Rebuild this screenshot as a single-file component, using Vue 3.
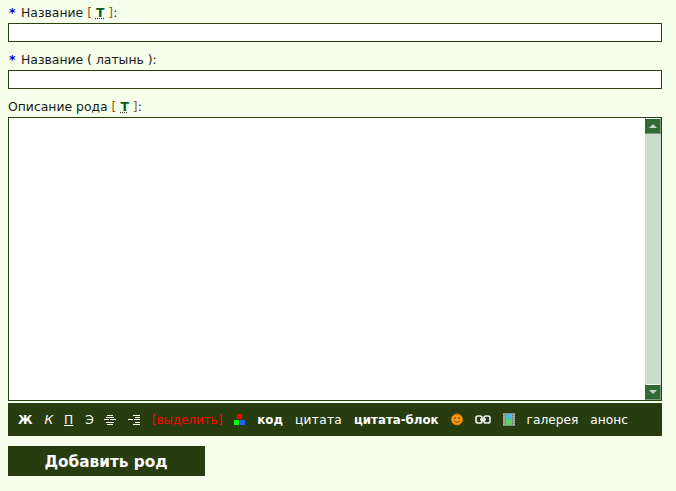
<script setup>
</script>

<template>
  <form class="page" @submit.prevent>
    <div class="field">
      <label class="label"><span class="req">*</span>Название <span class="br">[</span> <abbr class="t">T</abbr> <span class="br">]</span>:</label>
      <input class="input" type="text" />
    </div>
    <div class="field">
      <label class="label"><span class="req">*</span>Название ( латынь ):</label>
      <input class="input" type="text" />
    </div>
    <div class="field area">
      <label class="label">Описание рода <span class="br">[</span> <abbr class="t">T</abbr> <span class="br">]</span>:</label>
      <div class="box">
        <div class="text"></div>
        <div class="scroll">
          <div class="sbtn"><svg width="8" height="4" viewBox="0 0 8 4"><path d="M4 0 8 4H0Z" fill="#c5d5c5"/></svg></div>
          <div class="track"></div>
          <div class="sbtn"><svg width="8" height="4" viewBox="0 0 8 4"><path d="M0 0H8L4 4Z" fill="#c5d5c5"/></svg></div>
        </div>
      </div>
    </div>
    <div class="toolbar">
      <b class="tool">Ж</b>
      <i class="tool tight">К</i>
      <u class="tool">П</u>
      <span class="tool tight2">Э</span>
      <svg class="ico" width="12" height="12" viewBox="0 0 12 12"><path d="M3 1.500H9M2 3.500H10M0 5.500H5M6 5.500H12M2 8.500H10M3 10.500H9" stroke="#fff" fill="none"/></svg>
      <svg class="ico" width="12" height="12" viewBox="0 0 12 12"><path d="M5 1.500H12M7 3.500H12M0 5.500H5M6 5.500H12M7 8.500H12M5 10.500H12" stroke="#fff" fill="none"/></svg>
      <span class="tool sel">[выделить]</span>
      <svg class="ico" width="11" height="11" viewBox="0 0 11 11"><rect x="3" y="0" width="5" height="5" fill="#f00"/><rect x="0" y="6" width="5" height="5" fill="#0f0"/><rect x="6" y="6" width="5" height="5" fill="#2a5cff"/></svg>
      <b class="tool">код</b>
      <span class="tool cite">цитата</span>
      <b class="tool">цитата-блок</b>
      <svg class="ico" width="12" height="13" viewBox="0 0 12 13"><circle cx="6" cy="6.500" r="5.500" fill="#f2a010" stroke="#e87000"/><circle cx="4" cy="5" r="1" fill="#8a4000"/><circle cx="8" cy="5" r="1" fill="#8a4000"/><path d="M3 8Q6 11 9 8" stroke="#8a4000" fill="none"/></svg>
      <svg class="ico" width="16" height="9" viewBox="0 0 16 9"><rect x="1" y="1" width="6" height="7" rx="2" fill="none" stroke="#eee" stroke-width="1.700"/><rect x="9" y="1" width="6" height="7" rx="2" fill="none" stroke="#eee" stroke-width="1.700"/><path d="M5 4.500H11" stroke="#eee" stroke-width="2"/></svg>
      <svg class="ico" width="12" height="13" viewBox="0 0 12 13"><rect width="12" height="13" fill="#858f85"/><path d="M1 1V12M11 1V12" stroke="#d8dcd8" stroke-dasharray="1 1"/><rect x="3" y="1" width="6" height="5" fill="#4fb8e0"/><rect x="3" y="6" width="6" height="6" fill="#62d06a"/></svg>
      <span class="tool">галерея</span>
      <span class="tool">анонс</span>
    </div>
    <button class="submit" type="button">Добавить род</button>
  </form>
</template>

<style>
html, body { margin: 0; background: #f5ffeb; }
</style>

<style scoped>
.page {
  width: 654px;
  margin: 0 0 0 8px;
  padding-top: 4px;
  font-family: "DejaVu Sans", Verdana, sans-serif;
  font-size: 12.400px;
  color: #1a1a1a;
  height: 487px;
  display: flex;
  flex-direction: column;
}
.field { display: flex; flex-direction: column; margin-bottom: 9px; }
.label { height: 19px; line-height: 17px; white-space: pre-wrap; }
.req {
  display: inline-block;
  width: 13px;
  padding-left: 1px;
  box-sizing: border-box;
  color: #0000e0;
  font-weight: bold;
}
.br { color: #8a5a10; }
.t {
  color: #0f5a1e;
  font-weight: bold;
  text-decoration: underline dotted #333;
}
.input {
  box-sizing: border-box;
  width: 654px;
  height: 19px;
  margin: 0;
  padding: 0;
  border: 1px solid #29400f;
  background: #fff;
  display: block;
}
.area { margin-bottom: 2px; }
.box {
  box-sizing: border-box;
  height: 284px;
  border: 1px solid #29400f;
  background: #fff;
  display: flex;
}
.text { flex: 1; }
.scroll {
  width: 16px;
  display: flex;
  flex-direction: column;
  background: #ccdccd;
}
.sbtn {
  height: 16px;
  box-sizing: border-box;
  background: #2f6b35;
  border: 1px solid #7f9a80;
  border-top-color: #fff;
  border-left-color: #2f6b35;
  display: flex;
  align-items: center;
  justify-content: center;
}
.track { flex: 1; }
.toolbar {
  height: 33px;
  background: #273d10;
  display: flex;
  align-items: center;
  gap: 12px;
  padding-left: 10px;
  color: #fff;
  white-space: nowrap;
  font-size: 12.200px;
}
.tool { display: block; }
.toolbar b { font-size: 11.800px; }
.tight { margin-right: -1px; }
.tight2 { margin-right: -2px; }
.ico { display: block; flex: none; }
.sel { color: #f00; font-size: 11.900px; }
.cite { letter-spacing: .3px; }
.submit {
  margin: 10px 0 0;
  width: 197px;
  height: 30px;
  border: 0;
  padding: 2px 1px 0 0;
  background: #273d10;
  color: #fff;
  font-family: "DejaVu Sans", Verdana, sans-serif;
  font-weight: bold;
  font-size: 15.300px;
}
</style>
